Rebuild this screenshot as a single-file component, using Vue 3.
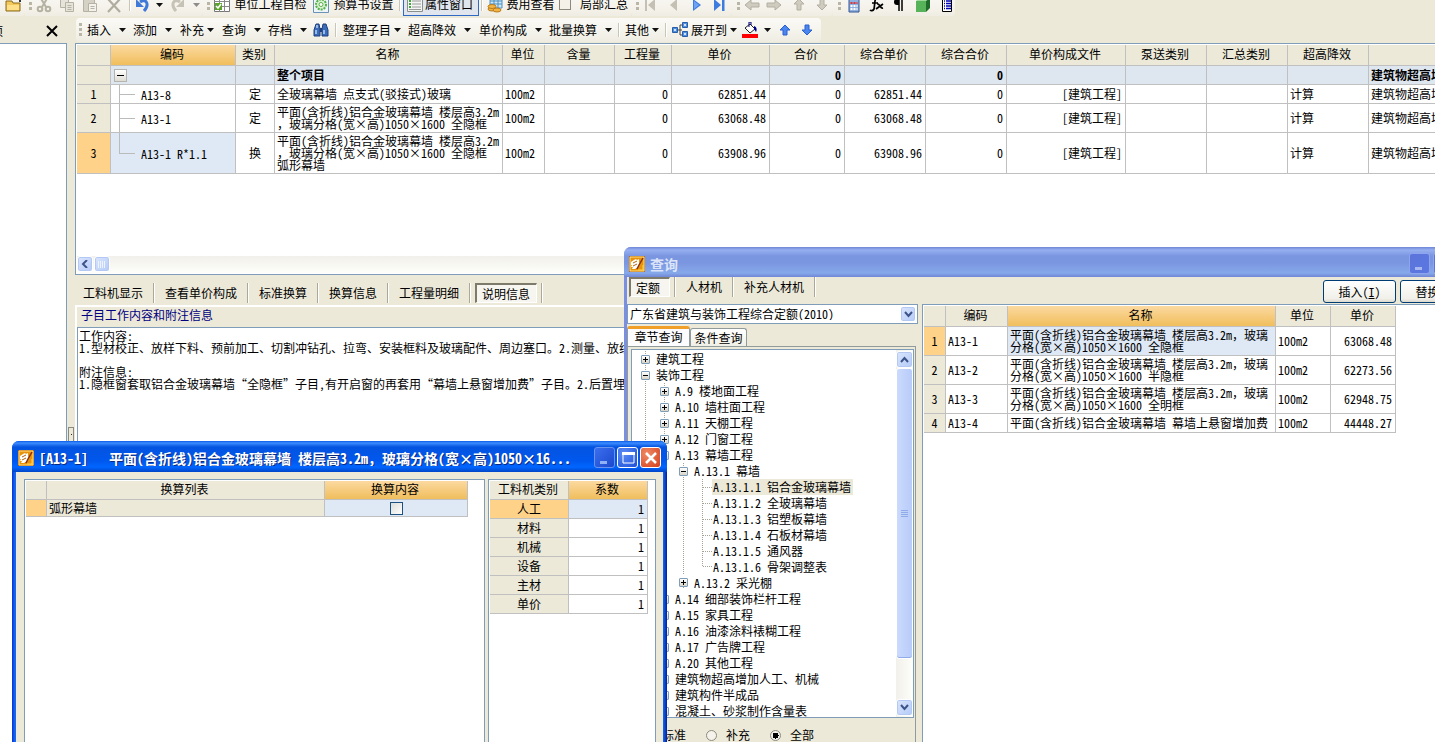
<script setup>
import { h, ref } from 'vue'

// Latin text uses half-width forms; commas in running Chinese text keep their full width.
const Txt = (p) => p.s.split(/(，)/).map((x) => (x === '，' ? h('span', { class: 'full-comma' }, x) : x))
Txt.props = ['s']

const caret = '<path d="M0 0h7L3.5 4z" fill="#111"/>'

const icons = {
  folder: '<path d="M1 4h6l1 2h7v8H1z" fill="#f3c95c" stroke="#8a6a1c"/><path d="M2 8h12v5H2z" fill="#ffe08a"/><path d="M9 1h6v4" fill="none" stroke="#333" stroke-width="2"/>',
  cut: '<g fill="none" stroke="#b5b2a3" stroke-width="2"><path d="M4 0l6 10M12 0L6 10"/><circle cx="4" cy="12" r="2.3"/><circle cx="12" cy="12" r="2.3"/></g>',
  copy: '<g fill="#e6e4da" stroke="#b5b2a3"><path d="M1.500 1.500h8v9h-8z"/><path d="M6.500 5.500h8v9h-8zM8.500 8.500h4M8.500 10.500h4M8.500 12.500h4"/></g>',
  paste: '<g fill="#d5d2c5" stroke="#b5b2a3"><path d="M1.500 1.500h11v13h-11z"/><path d="M6.500 6.500h8v8h-8zM8.500 9.500h4M8.500 11.500h4" fill="#f3f2ec"/></g>',
  del: '<path d="M2 2l12 13M14 2L2 15" stroke="#b0ada0" stroke-width="2.200" fill="none"/>',
  undo: '<path d="M5 5c6-4 10 2 4 9" fill="none" stroke="#3f7ad8" stroke-width="3"/><path d="M1 2v8h8z" fill="#3f7ad8"/>',
  redo: '<path d="M11 5C5 1 1 7 7 14" fill="none" stroke="#c6c3b6" stroke-width="3"/><path d="M15 2v8H7z" fill="#c6c3b6"/>',
  grid: '<path d="M.5.500h15v14H.500z" fill="#fff" stroke="#777"/><path d="M0 4.500h16M0 9.500h16M5.500 0v15M10.500 0v15" stroke="#888"/><path d="M1 6h7v7H1z" fill="#5aa32c"/><path d="M2 9l2 2 3-4" stroke="#fff" fill="none" stroke-width="1.500"/>',
  gear: '<path d="M.5.500h15v15H.500z" fill="#eef5f9" stroke="#6b93b8"/><circle cx="8" cy="7.500" r="5" fill="#d9f2d0" stroke="#55b04a" stroke-width="2" stroke-dasharray="2 1"/><circle cx="8" cy="7.500" r="2" fill="#fff" stroke="#55b04a"/>',
  props: '<path d="M.5.500h15v14H.500z" fill="#f3f5f3" stroke="#8b8f8b"/><path d="M2 4h2M2 7h2M2 10h2" stroke="#3fa83a" stroke-width="2"/><path d="M5 4h9M5 7h9M5 10h9M2 12.500h12" stroke="#999"/>',
  fee: '<path d="M3 0h12v11H3z" fill="#cfe6f6" stroke="#4a90c2"/><path d="M3 4h12M3 7h12M7 0v11M11 0v11" stroke="#4a90c2"/><g fill="#f2b544" stroke="#b97a1d"><ellipse cx="5" cy="12" rx="4" ry="2"/><ellipse cx="5" cy="9.500" rx="4" ry="2"/><ellipse cx="10" cy="13" rx="4" ry="2"/></g>',
  first: '<path d="M3 2h2v12H3zM13 2v12L6 8z" fill="#c4c1b4"/>',
  prev: '<path d="M12 2v12L5 8z" fill="#c4c1b4"/>',
  next: '<path d="M4 2v12l8-6z" fill="#3f7ce0"/><path d="M5 4v8l5-4z" fill="#6fa4f5"/>',
  last: '<path d="M3 2v12l7-6zM11 2h2.500v12H11z" fill="#3f7ce0"/>',
  gLeft: '<path d="M1 8l6-5v3h8v4H7v3z" fill="#cfccbf" stroke="#b2afa2"/>',
  gRight: '<path d="M15 8L9 3v3H1v4h8v3z" fill="#cfccbf" stroke="#b2afa2"/>',
  gUp: '<path d="M8 2l5 5h-3v6H6V7H3z" fill="#cfccbf" stroke="#b2afa2"/>',
  gDown: '<path d="M8 13l5-5h-3V2H6v6H3z" fill="#cfccbf" stroke="#b2afa2"/>',
  calc: '<path d="M3 1h10v14H3z" fill="#8fb0e2" stroke="#34568f"/><path d="M4.500 6h7" stroke="#d33" stroke-width="2" stroke-dasharray="2 1"/><path d="M4.500 9h7M4.500 12h7" stroke="#fff" stroke-width="2" stroke-dasharray="2 1"/>',
  fx: '<path d="M9 1C5 0 6 8 5 12c-1 2-3 2-4 1M3 6h6M8 7c3-1 3 5 6 4M14 7l-7 5" fill="none" stroke="#000" stroke-width="1.700"/>',
  para: '<path d="M7 2H6a3 3 0 000 6h2V2z" fill="#000"/><path d="M8 2v12M11 2v12M6 2h7" stroke="#000" stroke-width="1.500"/>',
  green: '<path d="M1 4h10v11H1z" fill="#56b35a"/><path d="M1 4l4-3h10l-4 3z" fill="#9bd79a"/><path d="M11 4l4-3v10l-4 4z" fill="#1f6b29"/>',
  list: '<path d="M3.500 1.500h9v13h-9z" fill="#fff" stroke="#000"/><path d="M5 4h1M7 4h5M5 6.500h1M7 6.500h5M5 9h1M7 9h5M5 11.500h1M7 11.500h5" stroke="#0000b0" stroke-width="1.500"/>',
  find: '<path d="M3 2h3l1 5v7H1V8zM13 2h-3L9 7v7h6V8z" fill="#3b6cb8" stroke="#1f3f7d"/><path d="M7 6h2v4H7z" fill="#1f3f7d"/><path d="M3 8v4M11 8v4M4 3v3" stroke="#b9d2f5" stroke-width="1.500"/>',
  expand: '<path d="M5 8h5M8 8V3h3M8 8v5h3" fill="none" stroke="#444"/><g fill="#4f8fe0" stroke="#2a5da8"><path d="M.5 5.500h5v5h-5z"/><path d="M10.500.500h5v5h-5zM10.500 9.500h5v5h-5z"/></g><path d="M2 7h2v2H2zM12 2h2v2h-2zM12 11h2v2h-2z" fill="#cfe3fb"/>',
  paint: '<path d="M3 6l5-4 5 5-5 4z" fill="#fff" stroke="#222"/><path d="M7 5V0h2v3" fill="none" stroke="#00007a"/><path d="M12 4c3 1 3 4 2 6l-2-3z" fill="#00008a"/><path d="M0 12h16v4H0z" fill="#f00"/>',
  up: '<path d="M8 3l5 5h-3v5H6V8H3z" fill="#4b86ee" stroke="#2a5fd0"/>',
  down: '<path d="M8 13l5-5h-3V3H6v5H3z" fill="#4b86ee" stroke="#2a5fd0"/>'
}

const groups = [
  [{ i: 'folder', t: '打开', w: 25 }],
  [
    { grip: 1, w: 10 }, { i: 'cut', t: '剪切', w: 18 }, { i: 'copy', t: '复制', w: 27 }, { i: 'paste', t: '粘贴', w: 20 },
    { i: 'del', t: '删除', w: 27 }, { sep: 1, w: 5 }, { i: 'undo', t: '撤销', w: 22 }, { caret: 1, t: '撤销列表', w: 11 },
    { i: 'redo', t: '恢复', w: 24 }, { caret: 1, dim: 1, t: '恢复列表', w: 14 }
  ],
  [
    { grip: 1, w: 10 }, { i: 'grid', t: '自检', w: 18 }, { text: '单位工程自检', w: 79 }, { i: 'gear', t: '设置', w: 21 },
    { text: '预算书设置', w: 65 }, { sep: 1, w: 7 }, { i: 'props', text: '属性窗口', on: 1, w: 76 }, { sep: 1, w: 5 },
    { i: 'fee', t: '费用', w: 22 }, { text: '费用查看', w: 49 }, { check: '局部汇总', w: 77 }
  ],
  [
    { grip: 1, w: 10 }, { i: 'first', t: '首项', w: 16 }, { i: 'prev', t: '上一项', w: 30 },
    { i: 'next', t: '下一项', w: 17 }, { i: 'last', t: '末项', w: 27 }
  ],
  [
    { grip: 1, w: 12 }, { i: 'gLeft', t: '左移', w: 16 }, { i: 'gRight', t: '右移', w: 27 },
    { i: 'gUp', t: '上移', w: 23 }, { i: 'gDown', t: '下移', w: 23 }
  ],
  [
    { grip: 1, w: 13 }, { i: 'calc', t: '计算器', w: 16 }, { i: 'fx', t: '函数', w: 30 }, { i: 'para', t: '段落', w: 14 },
    { i: 'green', t: '图集', w: 33 }, { i: 'list', t: '清单', w: 16 }
  ]
]

const menu = [
  { grip: 1, w: 9 }, { m: '插入', g: 8, w: 46 }, { m: '添加', g: 8, w: 47 }, { m: '补充', g: 3, w: 42 },
  { m: '查询', g: 8, w: 46 }, { m: '存档', g: 8, w: 44 }, { i: 'find', t: '查找', w: 21 }, { sep: 1, w: 10 },
  { m: '整理子目', g: 3, w: 65 }, { m: '超高降效', g: 8, w: 71 }, { m: '单价构成', g: 8, w: 70 }, { m: '批量换算', g: 8, w: 67 },
  { sep: 1, w: 9 }, { m: '其他', g: 3, w: 39 }, { sep: 1, w: 8 }, { i: 'expand', m: '展开到', g: 3, w: 68 },
  { i: 'paint', t: '填充颜色', w: 24 }, { caret: 1, t: '颜色列表', w: 11 }, { i: 'up', t: '上移', w: 24 }, { i: 'down', t: '下移', w: 20 }
]

const cols = [
  ['', 34], ['编码', 125], ['类别', 39], ['名称', 228], ['单位', 42], ['含量', 70], ['工程量', 57], ['单价', 98], ['合价', 75],
  ['综合单价', 81], ['综合合价', 81], ['单价构成文件', 119], ['泵送类别', 81], ['汇总类别', 81], ['超高降效', 81], ['', 160]
]
const desc = '平面(含折线)铝合金玻璃幕墙 楼层高3.2m，玻璃分格(宽×高)1050×1600 '
const rows = [
  { n: 1, code: 'A13-8', kind: '定', name: ['全玻璃幕墙 点支式(驳接式)玻璃'], price: '62851.44' },
  { n: 2, code: 'A13-1', kind: '定', name: ['平面(含折线)铝合金玻璃幕墙 楼层高3.2m', '，玻璃分格(宽×高)1050×1600 全隐框'], price: '63068.48' },
  { n: 3, code: 'A13-1 R*1.1', kind: '换', name: ['平面(含折线)铝合金玻璃幕墙 楼层高3.2m', '，玻璃分格(宽×高)1050×1600 全隐框', '弧形幕墙'], price: '63908.96' }
]

const tabs = ['工料机显示', '查看单价构成', '标准换算', '换算信息', '工程量明细']
const note = ref(`工作内容:
1.型材校正、放样下料、预前加工、切割冲钻孔、拉弯、安装框料及玻璃配件、周边塞口。2.测量、放线

附注信息:
1.隐框窗套取铝合金玻璃幕墙“全隐框”子目，有开启窗的再套用“幕墙上悬窗增加费”子目。2.后置埋件`)

// [ancestor levels, node kind, label, selected]
const tree = [
  [0, 'plus', '建筑工程'], [0, 'minus', '装饰工程'],
  [1, 'plus', 'A.9 楼地面工程'], [1, 'plus', 'A.10 墙柱面工程'], [1, 'plus', 'A.11 天棚工程'],
  [1, 'plus', 'A.12 门窗工程'], [1, 'minus', 'A.13 幕墙工程'], [2, 'minus', 'A.13.1 幕墙'],
  [3, 'leaf', 'A.13.1.1 铝合金玻璃幕墙', true], [3, 'leaf', 'A.13.1.2 全玻璃幕墙'], [3, 'leaf', 'A.13.1.3 铝塑板幕墙'],
  [3, 'leaf', 'A.13.1.4 石板材幕墙'], [3, 'leaf', 'A.13.1.5 通风器'], [3, 'leaf end', 'A.13.1.6 骨架调整表'],
  [2, 'plus end', 'A.13.2 采光棚'], [1, 'plus', 'A.14 细部装饰栏杆工程'], [1, 'plus', 'A.15 家具工程'],
  [1, 'plus', 'A.16 油漆涂料裱糊工程'], [1, 'plus', 'A.17 广告牌工程'], [1, 'plus', 'A.20 其他工程'],
  [1, 'plus', '建筑物超高增加人工、机械'], [1, 'plus', '建筑构件半成品'], [1, 'plus', '混凝土、砂浆制作含量表']
]
const scope = ref('全部')

const found = [
  ['A13-1', desc + '全隐框', '63068.48'], ['A13-2', desc + '半隐框', '62273.56'],
  ['A13-3', desc + '全明框', '62948.75'], ['A13-4', '平面(含折线)铝合金玻璃幕墙 幕墙上悬窗增加费', '44448.27']
]
const factors = ['人工', '材料', '机械', '设备', '主材', '单价']
const appIcon = '<path d="M.5.500h15v15H.500z" fill="#e8930c" stroke="#b9610a"/><path d="M1 1h14v14H1z" fill="none" stroke="#ffe27a"/><path d="M2 6l3-2 2-1 1 1 2-1v3l1 2-2 3-3 2H3l1-2H2l1-2H2z" fill="#fff"/><path d="M4 7l4-2M4 10l4-2" stroke="#b9610a"/><path d="M14 2l-4 7-2 4" stroke="#8c2f0a" stroke-width="1.500" fill="none"/><path d="M9 14h5V9" stroke="#ffd54a" fill="none"/>'
</script>

<template>
  <div class="app">
    <header class="bar bar-top">
      <div v-for="(g, gi) in groups" :key="gi" class="group">
        <template v-for="(it, k) in g" :key="k">
          <span v-if="it.grip" class="slot" :style="{ width: it.w + 'px' }"><i class="grip"></i></span>
          <span v-else-if="it.sep" class="slot" :style="{ width: it.w + 'px' }"><i class="sep"></i></span>
          <label v-else-if="it.check" class="slot check" :style="{ width: it.w + 'px' }"><input type="checkbox">{{ it.check }}</label>
          <button v-else class="slot" :class="{ on: it.on, dim: it.dim }" :style="{ width: it.w + 'px' }" :aria-label="it.t">
            <svg v-if="it.i" width="16" height="16" viewBox="0 0 16 16" v-html="icons[it.i]"></svg>
            <svg v-if="it.caret" width="7" height="4" viewBox="0 0 7 4" v-html="caret"></svg>
            <span v-if="it.text">{{ it.text }}</span>
          </button>
        </template>
      </div>
    </header>

    <div class="body">
      <aside class="side">
        <div class="side-head"><span class="side-title">项</span>
          <button aria-label="关闭"><svg width="12" height="12" viewBox="0 0 12 12"><path d="M1 1l10 10M11 1L1 11" stroke="#000" stroke-width="2" /></svg></button>
        </div>
        <div class="side-body"></div>
      </aside>
      <div class="gutter"><i></i></div>

      <main class="main">
        <nav class="bar bar-menu">
          <template v-for="(it, k) in menu" :key="k">
            <span v-if="it.grip" class="slot" :style="{ width: it.w + 'px' }"><i class="grip"></i></span>
            <span v-else-if="it.sep" class="slot" :style="{ width: it.w + 'px' }"><i class="sep"></i></span>
            <button v-else-if="it.m" class="slot menu-btn" :style="{ width: it.w + 'px' }">
              <svg v-if="it.i" class="lead" width="16" height="16" viewBox="0 0 16 16" v-html="icons[it.i]"></svg>
              <span>{{ it.m }}</span>
              <svg :style="{ marginLeft: it.g + 'px' }" width="7" height="4" viewBox="0 0 7 4" v-html="caret"></svg>
            </button>
            <button v-else class="slot" :style="{ width: it.w + 'px' }" :aria-label="it.t">
              <svg v-if="it.i" width="16" height="16" viewBox="0 0 16 16" v-html="icons[it.i]"></svg>
              <svg v-else width="7" height="4" viewBox="0 0 7 4" v-html="caret"></svg>
            </button>
          </template>
        </nav>

        <section class="sheet">
          <table class="grid items">
            <colgroup><col v-for="(c, k) in cols" :key="k" :style="{ width: c[1] + 'px' }"></colgroup>
            <thead>
              <tr><th v-for="(c, k) in cols" :key="k" :class="{ hot: k === 1 }">{{ c[0] }}</th></tr>
            </thead>
            <tbody>
              <tr class="total">
                <td class="num"></td>
                <td class="root"><button class="fold" aria-label="折叠"></button></td>
                <td></td><td>整个项目</td><td></td><td></td><td></td><td></td><td class="r">0</td><td></td><td class="r">0</td>
                <td></td><td></td><td></td><td></td><td>建筑物超高增加</td>
              </tr>
              <tr v-for="r in rows" :key="r.n" :class="'line-' + r.name.length">
                <td class="num" :class="{ sel: r.n === 3 }">{{ r.n }}</td>
                <td class="code" :class="{ picked: r.n === 3, last: r.n === 3 }">{{ r.code }}</td>
                <td class="c">{{ r.kind }}</td>
                <td><div v-for="s in r.name" :key="s"><Txt :s="s" /></div></td>
                <td>100m2</td><td></td><td class="r">0</td><td class="r">{{ r.price }}</td><td class="r">0</td>
                <td class="r">{{ r.price }}</td><td class="r">0</td><td class="r">[建筑工程]</td><td></td><td></td><td>计算</td><td>建筑物超高增加</td>
              </tr>
            </tbody>
          </table>
          <div class="hscroll">
            <button class="sb" aria-label="向左"><svg width="8" height="8" viewBox="0 0 8 8"><path d="M6 0L2 4l4 4" fill="none" stroke="#3c5488" stroke-width="2" /></svg></button>
            <button class="sb" aria-label="滚动块"><svg width="8" height="7" viewBox="0 0 8 7"><path d="M.5 0v7M2.500 0v7M4.500 0v7M6.500 0v7" stroke="#eef4fe" /></svg></button>
          </div>
        </section>

        <nav class="tabs">
          <button v-for="t in tabs" :key="t">{{ t }}</button>
          <span class="tab-cell"><button class="sunk">说明信息</button></span>
        </nav>
        <section class="memo">
          <label for="memo">子目工作内容和附注信息</label>
          <textarea id="memo" v-model="note" wrap="off" spellcheck="false"></textarea>
        </section>
      </main>
    </div>

    <section class="win query">
      <div class="title">
        <svg width="16" height="16" viewBox="0 0 16 16" v-html="appIcon"></svg>
        <h2>查询</h2>
        <button class="tb" aria-label="最小化"><svg width="18" height="18" viewBox="0 0 18 18"><path d="M4 12h7v3H4z" fill="#a9b7f0" /></svg></button>
        <button class="tb" aria-label="最大化"></button>
        <button class="tb" aria-label="关闭"></button>
      </div>
      <div class="client">
        <div class="q-bar">
          <nav class="tabs">
            <span class="tab-cell"><button class="sunk">定额</button></span>
            <button>人材机</button>
            <button>补充人材机</button>
          </nav>
          <div class="actions"><button class="xp">插入(<u>I</u>)</button><button class="xp">替换(<u>R</u>)</button></div>
        </div>
        <div class="q-body">
          <div class="q-left">
            <div class="combo">
              <select aria-label="定额库"><option>广东省建筑与装饰工程综合定额(2010)</option></select>
              <span class="sb"><svg width="9" height="7" viewBox="0 0 9 7"><path d="M1 1l3.500 4L8 1" fill="none" stroke="#3c5488" stroke-width="2" /></svg></span>
            </div>
            <div class="pages"><button class="page cur">章节查询</button><button class="page">条件查询</button></div>
            <div class="pane">
              <div class="tree-box">
                <ul class="tree">
                  <li v-for="t in tree" :key="t[2]">
                    <i v-for="n in t[0]" :key="n" class="lv"></i>
                    <i class="lv" :class="t[1]"><b></b></i>
                    <span :class="{ hit: t[3] }">{{ t[2] }}</span>
                  </li>
                </ul>
                <div class="vscroll">
                  <button class="sb" aria-label="向上"><svg width="9" height="7" viewBox="0 0 9 7"><path d="M1 6l3.500-4L8 6" fill="none" stroke="#3c5488" stroke-width="2" /></svg></button>
                  <div class="thumb"><svg width="7" height="8" viewBox="0 0 7 8"><path d="M0 .5h7M0 2.500h7M0 4.500h7M0 6.500h7" stroke="#8fabe8" /></svg></div>
                  <button class="sb" aria-label="向下"><svg width="9" height="7" viewBox="0 0 9 7"><path d="M1 1l3.500 4L8 1" fill="none" stroke="#3c5488" stroke-width="2" /></svg></button>
                </div>
              </div>
              <div class="radios">
                <label v-for="s in ['标准', '补充', '全部']" :key="s"><input v-model="scope" type="radio" name="scope" :value="s">{{ s }}</label>
              </div>
            </div>
          </div>
          <div class="q-right">
            <table class="grid found">
              <colgroup><col class="f1"><col class="f2"><col class="f3"><col class="f4"><col class="f5"></colgroup>
              <thead><tr><th></th><th>编码</th><th class="hot">名称</th><th>单位</th><th>单价</th></tr></thead>
              <tbody>
                <tr v-for="(f, k) in found" :key="k" :class="k < 3 ? 'line-2' : 'line-1'">
                  <td class="num" :class="{ sel: k === 0 }">{{ k + 1 }}</td><td>{{ f[0] }}</td>
                  <td :class="{ picked: k === 0 }"><Txt :s="f[1]" /></td><td>100m2</td><td class="r">{{ f[2] }}</td>
                </tr>
              </tbody>
            </table>
          </div>
        </div>
      </div>
    </section>

    <section class="win conv">
      <div class="title">
        <svg width="16" height="16" viewBox="0 0 16 16" v-html="appIcon"></svg>
        <h2>[A13-1]&nbsp;&nbsp; <Txt s="平面(含折线)铝合金玻璃幕墙 楼层高3.2m，玻璃分格(宽×高)1050×16..." /></h2>
        <button class="tb off" aria-label="最小化"><svg width="18" height="18" viewBox="0 0 18 18"><path d="M4 12h7v3H4z" fill="#8fb0f5" /></svg></button>
        <button class="tb" aria-label="最大化"><svg width="18" height="18" viewBox="0 0 18 18"><path d="M4 4h11v10H4z" fill="none" stroke="#fff" /><path d="M3 4.500h13" stroke="#fff" stroke-width="3" /></svg></button>
        <button class="tb close" aria-label="关闭"><svg width="18" height="18" viewBox="0 0 18 18"><path d="M4 4l10 10M14 4L4 14" stroke="#fff" stroke-width="2.500" /></svg></button>
      </div>
      <div class="client conv-body">
        <div class="box">
          <table class="grid rules">
            <colgroup><col class="c1"><col class="c2"><col class="c3"></colgroup>
            <thead><tr><th></th><th>换算列表</th><th class="hot">换算内容</th></tr></thead>
            <tbody><tr><td class="sel"></td><td class="flat">弧形幕墙</td><td class="picked c"><input type="checkbox" aria-label="弧形幕墙"></td></tr></tbody>
          </table>
        </div>
        <div class="box">
          <table class="grid factors">
            <colgroup><col class="k1"><col class="k2"></colgroup>
            <thead><tr><th>工料机类别</th><th class="hot">系数</th></tr></thead>
            <tbody>
              <tr v-for="(f, k) in factors" :key="f"><td class="num" :class="{ sel: k === 0 }">{{ f }}</td><td class="r" :class="{ picked: k === 0 }">1</td></tr>
            </tbody>
          </table>
        </div>
      </div>
    </section>
  </div>
</template>

<style>
body { background: #ece9d8; overflow: hidden; }
.full-comma { font-feature-settings: normal; }
</style>

<style scoped>
.app, .app * { box-sizing: border-box; }
.app {
  position: relative; display: flex; flex-direction: column; height: 100vh; overflow: hidden;
  background: #ece9d8; color: #000;
  font: 12px/12px "Noto Sans CJK SC", "Liberation Sans", sans-serif; font-feature-settings: "hwid";
}
button, input, select, textarea { font: inherit; font-feature-settings: inherit; color: inherit; margin: 0; padding: 0; }
button { border: 0; background: none; white-space: nowrap; }
svg { display: block; flex: none; }

.bar { display: flex; flex: none; }
.bar-top { height: 26px; margin-top: -8px; }
.bar-top svg { margin-top: 2px; }
.group { height: 24px; display: flex; background: linear-gradient(#fbfaf7, #f0eee3); border-radius: 0 4px 4px 0; }
.slot { display: flex; align-items: center; justify-content: center; flex: none; }
.grip { width: 3px; height: 15px; background: linear-gradient(#b9b6a6 3px, transparent 3px) 0 0 / 3px 5px; }
.sep { width: 2px; height: 14px; background: #c9c6b8; border-right: 1px solid #fff; }
.slot.on { border: 1px solid #316ac5; background: #e1e6ee; gap: 2px; justify-content: flex-start; padding-left: 3px; }
.dim { opacity: .45; }
.check { gap: 9px; }
input[type=checkbox] { appearance: none; width: 12px; height: 12px; border: 1px solid #8c8a7e; background: #f4f2e8; }

.body { flex: 1; display: flex; min-height: 0; }
.side { width: 67px; flex: none; display: flex; flex-direction: column; }
.side-head { height: 25px; display: flex; align-items: center; justify-content: space-between; padding-right: 9px; overflow: hidden; }
.side-title { width: 3px; display: flex; justify-content: flex-end; }
.side-body { flex: 1; background: #fff; border: solid #7f9db9; border-width: 1px 1px 0 0; }
.gutter { width: 8px; flex: none; padding-top: 409px; }
.gutter i { display: block; height: 40px; margin: 0 1px; border: 1px solid #8c8a7e; background: linear-gradient(#222, #222) 2px 6px / 1px 1px no-repeat; }
.main { flex: 1; min-width: 0; display: flex; flex-direction: column; }
.bar-menu { height: 24px; margin-bottom: 1px; align-self: flex-start; padding-right: 4px; background: linear-gradient(#fbfaf7, #efede2); border-radius: 4px; margin-left: 1px; }
.menu-btn { justify-content: flex-start; padding-left: 2px; }
.lead { margin-right: 3px; }

.sheet { height: 232px; flex: none; border: solid #7f9db9; border-width: 1px 0 1px 1px; background: #fff; padding: 1px 0 1px 1px; display: flex; flex-direction: column; justify-content: space-between; overflow: hidden; }
.grid { border-collapse: separate; border-spacing: 0; table-layout: fixed; flex: none; }
.grid th { font-weight: 400; background: #ece9d8; padding: 0 2px 2px 0; }
.grid th, .grid td { border: solid #c0c0c0; border-width: 0 1px 1px 0; }
.grid td { padding: 0 2px; vertical-align: middle; overflow: hidden; }
.grid .hot { background: linear-gradient(#fbd9a0, #f0be5c); }
.grid .r { text-align: right; white-space: nowrap; padding-right: 3px; }
.grid .c { text-align: center; }
.grid .num { background: #ece9d8; text-align: center; }
.grid .picked { background-color: #dfe9f6; }
.grid .sel { background: #ffd28a; }
.items { width: 1452px; }
.items thead tr { height: 21px; }
.items td { white-space: nowrap; }
.total, .line-1 { height: 19px; }
.line-2 { height: 29px; }
.line-3 { height: 41px; }
.total td { background: #dee6f0; font-weight: 700; }
.grid .root { padding-left: 3px; }
.fold { display: block; width: 13px; height: 13px; border: 1px solid #b5b5b0; background: linear-gradient(#000, #000) center / 7px 1px no-repeat, linear-gradient(#fff, #dedcd2); }
.grid .code { padding: 1px 0 0 30px; background-image: linear-gradient(#bbb, #bbb), linear-gradient(#bbb, #bbb); background-size: 1px 100%, 16px 1px; background-position: 8px 0, 8px 50%; background-repeat: no-repeat; }
.grid .code.last { background-size: 1px 50%, 16px 1px; }

.sb { display: flex; align-items: center; justify-content: center; flex: none; width: 16px; height: 16px; border: 1px solid #fff; border-radius: 3px; background: linear-gradient(135deg, #dbe6fd, #b4caf8); box-shadow: inset 0 0 0 1px #b3c8f2; }
.hscroll { display: flex; gap: 1px; height: 17px; background: linear-gradient(#f1f0ea, #fefefa); }

.tabs { display: flex; align-items: center; }
.main > .tabs { height: 30px; flex: none; padding-top: 6px; }
.tabs > button { height: 20px; padding: 0 10px; }
.main > .tabs > button:first-child { padding-left: 8px; }
.tabs > button, .tab-cell { border-right: 1px solid #aca899; box-shadow: 1px 0 #fff; margin-right: 1px; }
.tab-cell { padding: 0 4px; height: 20px; display: flex; }
.sunk { height: 20px; padding: 0 6px 0 5px; border: solid; border-width: 2px 1px 1px 2px; border-color: #7d7a6c #fff #fff #7d7a6c; background: #f6f5ef; }

.memo { flex: 1; min-height: 0; display: flex; flex-direction: column; border: solid #fff; border-width: 2px 0 0 2px; }
.memo label { height: 20px; padding: 2px 4px; color: #000080; flex: none; }
.memo textarea { flex: 1; border: solid #7f9db9; border-width: 1px 0 0 1px; background: #fff; resize: none; outline: 0; overflow: hidden; padding: 2px 1px; white-space: pre; line-height: 12px; }

.win { position: absolute; display: flex; flex-direction: column; border-radius: 7px 7px 0 0; overflow: hidden; }
.title { display: flex; align-items: center; flex: none; color: #fff; }
.title h2 { flex: 1; margin: 0 0 0 5px; font-size: 14px; line-height: 16px; font-weight: 700; white-space: nowrap; overflow: hidden; }
.tb { width: 21px; height: 21px; margin-left: 2px; border: 1px solid #fff; border-radius: 3px; background: radial-gradient(circle at 30% 30%, #5c8cf5, #1d4fd8); display: flex; align-items: center; justify-content: center; flex: none; }
.client { flex: 1; min-height: 0; background: #ece9d8; }

.query { left: 624px; right: -48px; top: 247px; bottom: 0; padding: 0 4px 0 3px; background: #7a8fe0; }
.query .title { height: 30px; background: linear-gradient(#6f86d8, #96b0f0 3px, #7b96e0 9px, #7b96e0 16px, #86a9ea 26px, #7186d6); margin: 0 -4px 0 -3px; padding: 3px 5px 0; }
.query h2 { color: #dbe4f8; }
.query .tb { border-color: #8ea4ee; background: linear-gradient(135deg, #5c74dc, #5a78e0); margin-left: 3px; }
.query .client { display: flex; flex-direction: column; }
.q-bar { display: flex; justify-content: space-between; height: 27px; padding-right: 6px; flex: none; }
.q-bar .tabs { align-self: flex-start; }
.q-bar .tab-cell { padding-left: 2px; }
.q-bar .sunk { padding: 0 9px 0 5px; }
.actions { display: flex; gap: 4px; align-items: flex-end; padding-bottom: 1px; }
.xp { width: 73px; height: 23px; border: 1px solid #003c74; border-radius: 3px; background: linear-gradient(#fff, #f0efe8 85%, #dcd8cc); }
.q-body { flex: 1; display: flex; min-height: 0; }
.q-left { width: 291px; flex: none; display: flex; flex-direction: column; }
.combo { height: 20px; display: flex; border: 1px solid #7f9db9; background: #fff; padding: 1px; flex: none; }
.combo select { appearance: none; flex: 1; min-width: 0; border: 0; background: none; padding-left: 1px; outline: 0; }
.pages { display: flex; align-items: flex-end; height: 22px; flex: none; }
.page { height: 18px; width: 57px; border: 1px solid #919b9c; border-bottom: 0; border-radius: 3px 3px 0 0; background: linear-gradient(#fff, #f0efe6); }
.page.cur { height: 20px; width: 63px; border-top: 3px solid #f0a028; background: #fcfcfe; padding-bottom: 2px; }
.pane { flex: 1; min-height: 0; display: flex; flex-direction: column; border: 1px solid #919b9c; margin-right: 2px; border-bottom: 0; background: #ece9d8; }
.tree-box { height: 369px; flex: none; margin: 2px 1px 0 3px; border: 1px solid #7f9db9; background: #fff; display: flex; justify-content: space-between; overflow: hidden; }
.tree { list-style: none; margin: 0; padding: 1px 0 0 4px; }
.tree li { height: 16px; display: flex; align-items: center; white-space: nowrap; }
.tree span { padding: 2px 2px 2px 1px; }
.tree .hit { background: #ece9d8; }
.lv { width: 19px; height: 16px; flex: none; display: flex; align-items: center; justify-content: center; background: linear-gradient(#a5a294 1px, transparent 1px) 9px 0 / 1px 2px repeat-y; }
.lv b { width: 9px; height: 9px; border: 1px solid #7f9db9; border-radius: 1px; flex: none; background: linear-gradient(#000, #000) center / 5px 1px no-repeat, linear-gradient(#fff, #d8d4c6); }
.lv.plus b { background: linear-gradient(#000, #000) center / 5px 1px no-repeat, linear-gradient(#000, #000) center / 1px 5px no-repeat, linear-gradient(#fff, #d8d4c6); }
.lv.leaf b { width: 9px; height: 1px; border: 0; margin-left: 9px; border-radius: 0; background: linear-gradient(90deg, #a5a294 1px, transparent 1px) 0 0 / 2px 1px repeat-x; }
.lv.end { background-clip: content-box; }
.lv.leaf.end { padding-bottom: 8px; align-items: flex-end; }
.lv.plus.end { padding: 3px 0; align-items: flex-start; }
.vscroll { width: 17px; display: flex; flex-direction: column; background: linear-gradient(90deg, #f1f0ea, #fefefa); padding: 1px 0; }
.vscroll .sb { width: 17px; height: 17px; }
.thumb { height: 291px; border: 1px solid #fff; border-radius: 3px; background: linear-gradient(90deg, #cbdafd, #b8ccf9); box-shadow: inset 0 -1px #8fabe8; display: flex; align-items: center; justify-content: center; }
.thumb + .sb { margin-top: auto; }
.radios { display: flex; gap: 20px; padding: 11px 0 0 14px; }
.radios label { display: flex; align-items: center; gap: 9px; }
.radios input { appearance: none; width: 11px; height: 11px; border: 1px solid #8c8a7e; border-radius: 50%; background: #f4f2ea; }
.radios input:checked { background: radial-gradient(circle, #000 3px, #f4f2ea 3px); }
.q-right { flex: 1; min-width: 0; margin-left: 4px; background: #fff; border: solid #7f9db9; border-width: 1px 0 0 1px; padding: 1px; }
.found { width: 472px; }
.found thead tr { height: 21px; }
.f1 { width: 22px; } .f2 { width: 62px; } .f3 { width: 268px; } .f4 { width: 55px; } .f5 { width: 65px; }

.conv { left: 12px; width: 655px; top: 441px; bottom: 0; padding: 0 4px; background: linear-gradient(90deg, #0831d9, #166aee 3px, #166aee 651px, #001ea0); }
.conv .title { height: 31px; margin: 0 -4px; padding: 2px 6px 0; background: linear-gradient(#0a5be8, #3c8cff 2px, #0453e0 6px, #0058ee 20px, #0066ff 26px, #0046c8); }
.conv h2 { text-shadow: 1px 1px #0a2a80; }
.tb.off { border-color: #6a93f0; background: linear-gradient(135deg, #3a6ff0, #1c48cc); }
.tb.close { background: radial-gradient(circle at 30% 30%, #f08a66, #d2401a); }
.conv-body { display: flex; gap: 3px; padding: 7px 7px 0 8px; }
.box { border: 1px solid #7f9db9; border-bottom: 0; background: #fff; padding: 1px; }
.box:first-child { flex: 1; }
.box + .box { width: 168px; }
.rules { width: 442px; }
.rules thead tr, .factors tr { height: 19px; }
.rules tbody tr { height: 17px; }
.c1 { width: 21px; } .c2 { width: 278px; } .c3 { width: 143px; }
.rules .flat { background: #ece9d8; }
.rules input { display: block; margin: 0 auto; width: 13px; height: 13px; border-color: #1c5180; background: linear-gradient(135deg, #dcdcd7, #fff); }
.factors { width: 158px; }
.k1 { width: 79px; } .k2 { width: 79px; }
</style>
